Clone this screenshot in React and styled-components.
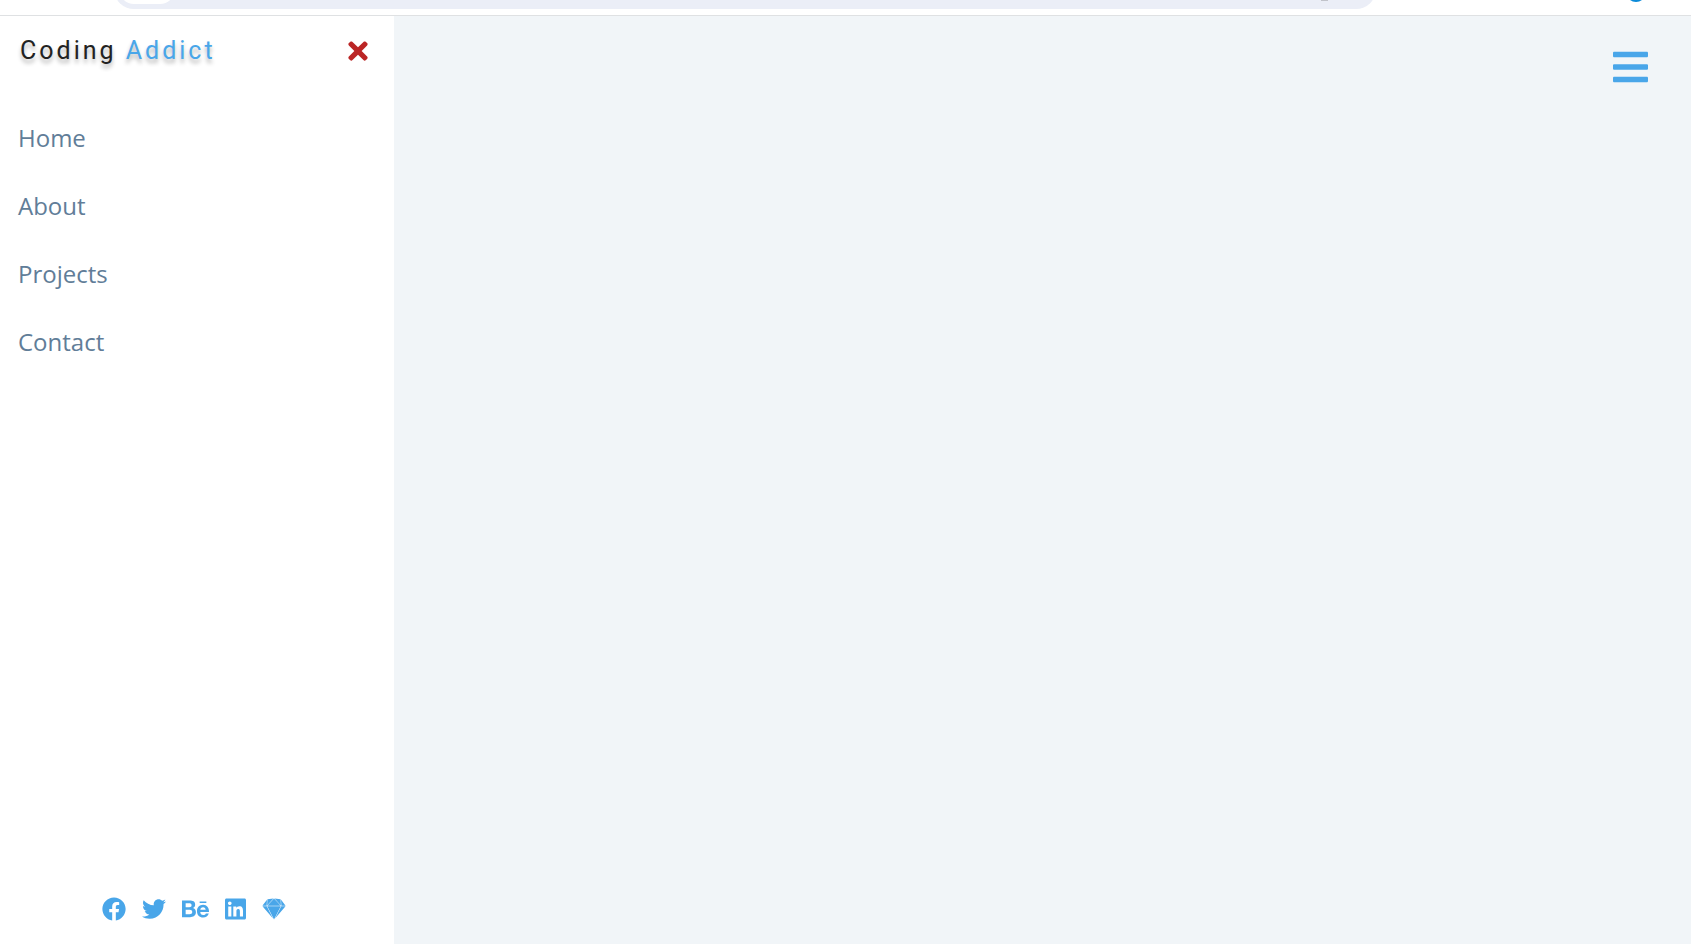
import React, { useState } from 'react';
import styled, { createGlobalStyle } from 'styled-components';
import { FaBars, FaTimes, FaFacebook, FaTwitter, FaBehance, FaLinkedin, FaSketch } from 'react-icons/fa';

const GlobalStyle = createGlobalStyle`
  * {
    margin: 0;
    padding: 0;
    box-sizing: border-box;
  }
  body {
    font-family: 'Open Sans', sans-serif;
    background: #f1f5f8;
    color: #222;
  }
`;

const Page = styled.div`
  display: flex;
  flex-direction: column;
  height: 100vh;
`;

const Toolbar = styled.div`
  display: flex;
  align-items: flex-end;
  justify-content: space-between;
  flex: none;
  height: 16px;
  padding: 0 45px 0 114px;
  background: #fff;
  border-bottom: 1px solid #dfe1e3;
  overflow: hidden;
`;

const AddressBar = styled.div`
  display: flex;
  align-items: flex-end;
  justify-content: space-between;
  flex: 1;
  height: 40px;
  margin: 0 250px 6px 0;
  padding: 0 48px 0 5px;
  border-radius: 20px;
  background: #ebeef7;
`;

const SiteChip = styled.div`
  width: 56px;
  height: 30px;
  margin-bottom: 5px;
  border-radius: 15px;
  background: #fff;
`;

const BarMark = styled.div`
  width: 7px;
  height: 8px;
  margin-bottom: 8px;
  border-bottom: 4px solid #c1c3ca;
`;

const Avatar = styled.div`
  width: 20px;
  height: 20px;
  margin-bottom: 13px;
  border-radius: 50%;
  background: #0b8ad8;
`;

const Content = styled.div`
  display: flex;
  justify-content: space-between;
  align-items: flex-start;
  flex: 1;
`;

const Sidebar = styled.aside`
  display: flex;
  flex-direction: column;
  align-self: stretch;
  width: 394px;
  max-width: 100%;
  background: #fff;
`;

const SidebarHeader = styled.div`
  display: flex;
  justify-content: space-between;
  align-items: center;
  height: 70px;
  padding: 0 26px 0 20px;
`;

const Logo = styled.h1`
  font-family: Roboto, sans-serif;
  font-size: 25px;
  font-weight: 400;
  line-height: 32px;
  letter-spacing: 3px;
  text-shadow: 0 4px 4px rgba(0, 0, 0, 0.3);

  span {
    color: #49a6e9;
  }
`;

const IconButton = styled.button`
  display: flex;
  border: none;
  background: transparent;
  color: ${(props) => props.$color};
  cursor: pointer;

  svg {
    width: ${(props) => props.$width}px;
    height: ${(props) => props.$height}px;
  }
`;

const Links = styled.ul`
  flex: 1;
  padding-top: 18px;
  list-style: none;
`;

const NavLink = styled.a`
  display: block;
  padding: 16px 18px;
  font-size: 24px;
  line-height: 36px;
  color: #617d98;
  text-decoration: none;
`;

const SocialIcons = styled.ul`
  display: flex;
  justify-content: center;
  gap: 16px;
  padding: 0 6px 23px 0;
  list-style: none;
`;

const SocialLink = styled.a`
  display: flex;
  color: #49a6e9;

  svg {
    width: ${(props) => props.$width}px;
    height: 24px;
  }
`;

const Main = styled.main`
  margin-left: auto;
  padding: 31px 43px;
`;

const links = [
  { id: 1, url: '#home', text: 'Home' },
  { id: 2, url: '#about', text: 'About' },
  { id: 3, url: '#projects', text: 'Projects' },
  { id: 4, url: '#contact', text: 'Contact' },
];

const social = [
  { id: 1, url: '#facebook', name: 'Facebook', width: 24, icon: <FaFacebook /> },
  { id: 2, url: '#twitter', name: 'Twitter', width: 24, icon: <FaTwitter /> },
  { id: 3, url: '#behance', name: 'Behance', width: 27, icon: <FaBehance /> },
  { id: 4, url: '#linkedin', name: 'LinkedIn', width: 21, icon: <FaLinkedin /> },
  { id: 5, url: '#sketch', name: 'Sketch', width: 24, icon: <FaSketch /> },
];

const App = () => {
  const [isSidebarOpen, setIsSidebarOpen] = useState(true);

  return (
    <Page>
      <GlobalStyle />
      <Toolbar>
        <AddressBar>
          <SiteChip />
          <BarMark />
        </AddressBar>
        <Avatar />
      </Toolbar>
      <Content>
        {isSidebarOpen && (
          <Sidebar>
            <SidebarHeader>
              <Logo>
                Coding <span>Addict</span>
              </Logo>
              <IconButton
                $color="#bb2525"
                $width={20}
                $height={28}
                aria-label="Close menu"
                onClick={() => setIsSidebarOpen(false)}
              >
                <FaTimes />
              </IconButton>
            </SidebarHeader>
            <Links>
              {links.map((link) => (
                <li key={link.id}>
                  <NavLink href={link.url}>{link.text}</NavLink>
                </li>
              ))}
            </Links>
            <SocialIcons>
              {social.map((item) => (
                <li key={item.id}>
                  <SocialLink href={item.url} $width={item.width} aria-label={item.name}>
                    {item.icon}
                  </SocialLink>
                </li>
              ))}
            </SocialIcons>
          </Sidebar>
        )}
        <Main>
          <IconButton
            $color="#49a6e9"
            $width={35}
            $height={40}
            aria-label="Open menu"
            onClick={() => setIsSidebarOpen(true)}
          >
            <FaBars />
          </IconButton>
        </Main>
      </Content>
    </Page>
  );
};

export default App;
